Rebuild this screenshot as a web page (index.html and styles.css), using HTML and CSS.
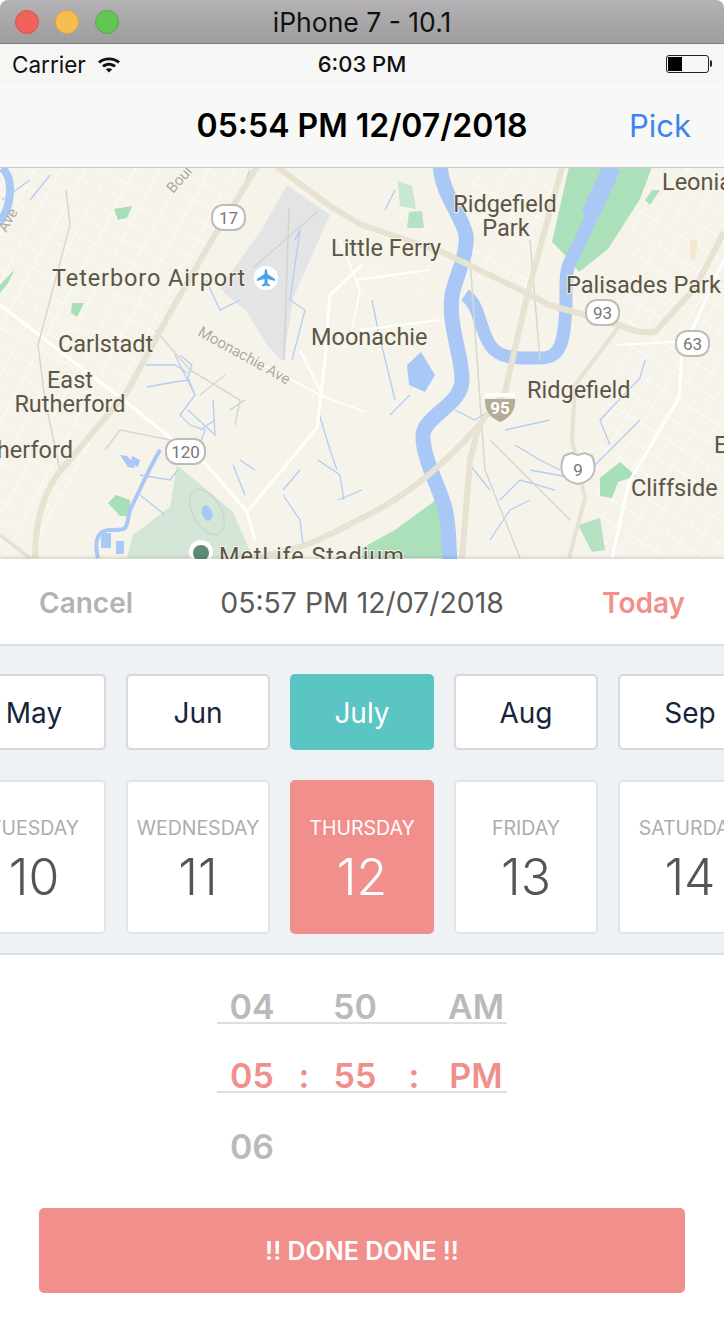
FILE: index.html
```html
<!DOCTYPE html>
<html lang="en">
<head>
    <meta charset="UTF-8" />
    <title>Date Picker</title>
    <link rel="stylesheet" href="styles.css">
</head>
<body>
    <div class="window-bar">
        <div class="lights">
            <span class="light light-red"></span>
            <span class="light light-yellow"></span>
            <span class="light light-green"></span>
        </div>
        <div class="window-title">iPhone 7 - 10.1</div>
    </div>

    <div class="status-bar">
        <div class="carrier">
            Carrier
            <svg class="wifi" width="24" height="18" viewBox="0 0 24 18">
                <path d="M1 6.500C7 1 17 1 23 6.500L21 8.600C16 4.200 8 4.200 3 8.600Z" />
                <path d="M5 10.400C9 7 15 7 19 10.400L17 12.500C14 10 10 10 7 12.500Z" />
                <path d="M8.800 14.200C10.800 12.800 13.200 12.800 15.200 14.200L12 17.600Z" />
            </svg>
        </div>
        <div class="clock">6:03 PM</div>
        <div class="battery"><div class="battery-level"></div></div>
    </div>

    <div class="nav-bar">
        <div class="nav-title">05:54 PM 12/07/2018</div>
        <div class="nav-action">Pick</div>
    </div>

    <div class="map">
        <svg class="map-svg" width="724" height="391" viewBox="0 168 724 391">
            <g class="map-shapes">
                <rect x="0" y="167" width="724" height="392" fill="#f6f3ea" />

                <!-- street grids -->
                <defs>
                    <pattern id="grid-left" width="22" height="17" patternUnits="userSpaceOnUse" patternTransform="rotate(28)">
                        <path d="M0 0H22M0 0V17" stroke="#fff" stroke-width="1.200" fill="none" />
                    </pattern>
                    <pattern id="grid-right" width="20" height="16" patternUnits="userSpaceOnUse" patternTransform="rotate(-58)">
                        <path d="M0 0H20M0 0V16" stroke="#fff" stroke-width="1.200" fill="none" />
                    </pattern>
                    <pattern id="grid-mid" width="30" height="24" patternUnits="userSpaceOnUse" patternTransform="rotate(-62)">
                        <path d="M0 0H30M0 0V24" stroke="#fff" stroke-width="1.100" fill="none" />
                    </pattern>
                </defs>
                <polygon points="0,167 255,167 170,320 120,400 60,500 30,558 0,558" fill="url(#grid-left)" />
                <polygon points="635,167 724,167 724,558 590,558 600,420 625,330" fill="url(#grid-right)" />
                <polygon points="470,167 560,167 525,290 475,280 470,240" fill="url(#grid-mid)" />
                <polygon points="340,230 430,190 440,300 360,310" fill="url(#grid-mid)" opacity="0.7" />

                <!-- parks -->
                <polygon points="569,167 652,167 640,199 608,249 579,272 568,258 552,242" fill="#abe0bb" />
                <polygon points="177,465 233,512 253,558 127,558 133,535 170,507" fill="#d3e6d8" />
                <polygon points="116,495 130,500 130,516 120,516 108,503" fill="#a6dfb8" />
                <polygon points="114,209 132,206 127,218 118,220" fill="#a6dfb8" />
                <polygon points="72,303 84,303 77,317 71,313" fill="#a6dfb8" />
                <polygon points="0,285 15,269 8,283 0,293" fill="#a6dfb8" />
                <polygon points="398,181 412,186 416,209 400,206" fill="#c9e7d0" />
                <polygon points="409,212 422,211 424,228 407,228" fill="#b5e2c3" />
                <polygon points="600,478 620,462 636,476 618,482 612,498 600,496" fill="#a6dfb8" />
                <polygon points="578,525 600,518 605,550 592,552" fill="#b5e2c3" />
                <polygon points="362,548 395,530 440,497 444,558 362,558" fill="#abe0bb" />
                <polygon points="652,190 660,190 650,205 645,200" fill="#abe0bb" />
                <polygon points="690,240 698,240 695,260 690,258" fill="#f1e8cf" />
                <ellipse cx="207" cy="512" rx="14" ry="25" fill="none" stroke="#c9d9cd" stroke-width="1.500" transform="rotate(-30 207 512)" />

                <!-- airport -->
                <polygon points="287,185 330,215 293,298 283,362 267,345 247,312 227,295 220,288 260,232" fill="#e3e4e6" />
                <path class="runway" d="M289 208L284 360M317 212L253 268" />

                <!-- water -->
                <path class="river" d="M440 165C442 195 462 215 466 235C468 255 456 275 452 295C448 325 462 355 462 380C462 405 425 415 423 435C422 455 438 485 444 505C450 525 448 540 450 560" stroke-width="15" />
                <path class="river" d="M465 295C480 305 478 325 490 345C500 360 520 358 540 358C560 358 565 345 566 300C566 280 565 270 572 258C585 235 595 205 612 167" stroke-width="13" />
                <path class="river" d="M612 167L590 215" stroke-width="18" />
                <path class="river" d="M2 168C14 178 12 205 0 222" stroke-width="8" />
                <polygon points="407,365 421,352 435,375 425,392 409,385" fill="#a9c8f5" />
                <polygon points="120,455 120,455 127,456 133,462 135,468 128,467" fill="#a9c8f5" />
                <ellipse cx="207" cy="513" rx="5" ry="8" fill="#a9c8f5" transform="rotate(-20 207 513)" />
                <rect x="101" y="533" width="10" height="15" fill="#a9c8f5" />
                <rect x="116" y="541" width="8" height="13" fill="#a9c8f5" />
                <polygon points="132,456 140,460 138,467 131,463" fill="#a9c8f5" />
                <path class="creek-wide" d="M160 450C148 470 140 490 130 510C125 530 130 530 108 530C95 532 95 545 98 558" />
                <path class="creek" d="M180 355L192 365L188 378L195 395L180 415L190 425L205 430L198 450M146 365L175 365L188 373M147 387L175 382L190 380M175 355L195 395M188 410L215 435L213 400M140 475L170 480L178 470M140 495L165 515M200 430L215 420M230 410L245 400M240 460L255 470M233 465L245 495M283 490L300 470M283 495L300 520L303 545M318 410L330 450L337 470M318 460L340 475L344 500M338 500L362 490M206 280L220 310L240 300M295 240L300 230L290 300L305 310L292 360" />
                <path class="creek" d="M455 410L475 420L505 400M505 430L550 420M515 445L540 460L560 470M530 470L585 480M500 500L520 480L555 490M490 540L510 510L530 500M610 445L600 420L640 378L645 360M585 475L640 420M385 210L395 190M372 300L378 330L395 400M410 395L390 415M470 465L490 490" />
                <path class="creek" d="M2 200L30 180M50 175L30 200M240 195L250 170" />

                <!-- roads -->
                <path class="road-white" d="M0 305L43 338L130 405L167 435L207 465L247 512L255 540M247 512L317 428L325 360L330 295L362 265M724 260L682 352L679 398L629 482L612 558" />
                <path class="road-white thin" d="M200 332L320 395L365 412M615 345L675 342M360 330L440 320M340 240L360 290L350 340M355 280L430 270M560 180L525 290M300 350L320 390" />
                <path class="road-grey" d="M66 190L70 225L38 345L45 400L60 470M170 440L120 430L105 450M155 330L190 370L240 400L235 425M200 395L225 375M530 240L540 360M470 260L485 470L520 558M490 440L570 520" />
                <path class="highway" d="M562 167L529 288L505 392L479 425L470 460L462 558" />
                <path class="highway" d="M479 425C440 470 400 500 362 518C320 540 300 552 245 558" />
                <path class="highway" d="M257 167L213 238L167 318L127 392L57 475C40 500 35 530 35 558" />
                <path class="highway" d="M277 167L333 208L362 225L442 252L525 292L549 305L585 315L619 325C640 335 650 332 655 332L695 288L724 232" />
                <path class="highway thin" d="M620 325L575 385L572 440L585 498L569 558" />
                <path class="highway thin" d="M0 535L30 558" />
            </g>

            <!-- labels -->
            <text class="map-label map-label-wide" x="52" y="286">Teterboro Airport</text>
            <text class="map-label" x="331" y="256">Little Ferry</text>
            <text class="map-label" x="505" y="212" text-anchor="middle">Ridgefield</text>
            <text class="map-label" x="506" y="236" text-anchor="middle">Park</text>
            <text class="map-label" x="662" y="190">Leonia</text>
            <text class="map-label" x="566" y="293">Palisades Park</text>
            <text class="map-label" x="311" y="345">Moonachie</text>
            <text class="map-label" x="58" y="352">Carlstadt</text>
            <text class="map-label" x="70" y="388" text-anchor="middle">East</text>
            <text class="map-label" x="70" y="412" text-anchor="middle">Rutherford</text>
            <text class="map-label" x="73" y="458" text-anchor="end">Rutherford</text>
            <text class="map-label" x="527" y="398">Ridgefield</text>
            <text class="map-label" x="631" y="496">Cliffside</text>
            <text class="map-label" x="714" y="453">E</text>
            <text class="map-label map-label-wide" x="219" y="564">MetLife Stadium</text>
            <text class="map-road-label" transform="translate(197 335) rotate(29)">Moonachie Ave</text>
            <text class="map-road-label" transform="translate(6 233) rotate(-60)">Ave</text>
            <text class="map-road-label" transform="translate(173 194) rotate(-48)">Boul</text>

            <!-- shields -->
            <g class="shield">
                <rect x="212" y="205" width="33" height="25" rx="11" />
                <text x="228.500" y="224">17</text>
            </g>
            <g class="shield">
                <rect x="166" y="439" width="39" height="25" rx="11" />
                <text x="185.500" y="458">120</text>
            </g>
            <g class="shield">
                <rect x="586" y="300" width="33" height="25" rx="11" />
                <text x="602.500" y="319">93</text>
            </g>
            <g class="shield">
                <rect x="676" y="331" width="33" height="25" rx="11" />
                <text x="692.500" y="350">63</text>
            </g>
            <g class="shield">
                <path d="M564 456L571 453L578 455L585 453L592 456C598 470 594 481 578 484C562 481 558 470 564 456Z" />
                <text x="578" y="476">9</text>
            </g>
            <path d="M485 393H515V397H485Z" fill="#fff" />
            <path d="M485 399H515C516 410 510 418 500 422C490 418 484 410 485 399Z" fill="#b5ac95" />
            <text class="shield-95" x="500" y="414">95</text>

            <circle cx="266" cy="278" r="12" fill="#fff" />
            <path d="M266 269C267 269 267.500 271 267.500 274L275 279V281L267.500 279V283L270 285V286.500L266 285.500L262 286.500V285L264.500 283V279L257 281V279L264.500 274C264.500 271 265 269 266 269Z" fill="#4aa3e8" />

            <circle cx="201" cy="552" r="12" fill="#fff" />
            <circle cx="201" cy="553" r="8" fill="#5c8b72" />
        </svg>
    </div>

    <div class="sheet">
        <div class="sheet-header">
            <div class="sheet-cancel">Cancel</div>
            <div class="sheet-time">05:57 PM 12/07/2018</div>
            <div class="sheet-today">Today</div>
        </div>

        <div class="calendar">
            <div class="card-row">
                <div class="card month-card">May</div>
                <div class="card month-card">Jun</div>
                <div class="card month-card month-active">July</div>
                <div class="card month-card">Aug</div>
                <div class="card month-card">Sep</div>
            </div>
            <div class="card-row">
                <div class="card day-card">
                    <div class="day-name">Tuesday</div>
                    <div class="day-number">10</div>
                </div>
                <div class="card day-card">
                    <div class="day-name">Wednesday</div>
                    <div class="day-number">11</div>
                </div>
                <div class="card day-card day-active">
                    <div class="day-name">Thursday</div>
                    <div class="day-number">12</div>
                </div>
                <div class="card day-card">
                    <div class="day-name">Friday</div>
                    <div class="day-number">13</div>
                </div>
                <div class="card day-card">
                    <div class="day-name">Saturday</div>
                    <div class="day-number">14</div>
                </div>
            </div>
        </div>

        <div class="time-picker">
            <div class="time-row time-row-lined">
                <span>04</span><span></span><span>50</span><span></span><span class="time-ampm">AM</span>
            </div>
            <div class="time-row time-row-lined time-row-active">
                <span>05</span><span>:</span><span>55</span><span>:</span><span class="time-ampm">PM</span>
            </div>
            <div class="time-row">
                <span>06</span><span></span><span></span><span></span><span></span>
            </div>
        </div>

        <div class="done-wrap">
            <div class="done-button">!! DONE DONE !!</div>
        </div>
    </div>
</body>
</html>
```

FILE: styles.css
```css
html {
    height: 100%;
}
body {
    margin: 0;
    padding: 0;
    width: 724px;
    height: 1332px;
    overflow: hidden;
    background: #fff;
    font-family: "Inter", "Liberation Sans", sans-serif;
}
.window-bar {
    position: relative;
    display: flex;
    align-items: center;
    justify-content: center;
    height: 43px;
    border-bottom: 1px solid #7d7b7d;
    border-radius: 8px 8px 0 0;
    background: linear-gradient(#b4b2b4, #9e9c9e);
}
.lights {
    position: absolute;
    left: 15px;
    top: 10px;
    display: flex;
    gap: 16px;
}
.light {
    width: 24px;
    height: 24px;
    border-radius: 50%;
    box-sizing: border-box;
}
.light-red {
    background: #f0625c;
    border: 1px solid #d9534f;
}
.light-yellow {
    background: #f6bd4f;
    border: 1px solid #dea63e;
}
.light-green {
    background: #62c655;
    border: 1px solid #50ab46;
}
.window-title {
    font-size: 26.500px;
    color: #111;
}
.status-bar {
    display: flex;
    align-items: center;
    justify-content: space-between;
    position: relative;
    height: 40px;
    padding: 0 15px 0 12px;
    background: #f6f6f4;
    color: #111;
}
.carrier {
    display: flex;
    align-items: center;
    gap: 11px;
    font-size: 22.500px;
}
.wifi {
    fill: #111;
}
.clock {
    position: absolute;
    left: 0;
    right: 0;
    text-align: center;
    font-size: 22px;
    font-weight: 500;
}
.battery {
    position: relative;
    width: 43px;
    height: 18px;
    box-sizing: border-box;
    border: 1.500px solid #222;
    border-radius: 3px;
    padding: 1px;
}
.battery::after {
    content: "";
    position: absolute;
    right: -4px;
    top: 4px;
    width: 2px;
    height: 7px;
    background: #222;
    border-radius: 0 2px 2px 0;
}
.battery-level {
    width: 14px;
    height: 100%;
    background: #000;
}
.nav-bar {
    position: relative;
    display: flex;
    align-items: center;
    justify-content: flex-end;
    height: 84px;
    box-sizing: border-box;
    padding: 0 33px 0 0;
    border-bottom: 1px solid #c8c8c6;
    background: #f8f8f6;
}
.nav-title {
    position: absolute;
    left: 0;
    right: 0;
    text-align: center;
    font-size: 32px;
    font-weight: 600;
    color: #000;
}
.nav-action {
    font-size: 31px;
    color: #3b87ef;
}
.map {
    height: 391px;
    overflow: hidden;
}
.map-svg {
    display: block;
}
.map-shapes {
    filter: blur(0.6px);
}
.river {
    fill: none;
    stroke: #a9c8f5;
    stroke-linejoin: round;
}
.creek-wide {
    fill: none;
    stroke: #a9c8f5;
    stroke-width: 4;
}
.creek {
    fill: none;
    stroke: #b3cdf4;
    stroke-width: 1.300;
}
.road-white {
    fill: none;
    stroke: #fff;
    stroke-width: 3;
}
.road-white.thin {
    stroke-width: 1.800;
}
.road-grey {
    fill: none;
    stroke: #d9d6cd;
    stroke-width: 1.500;
}
.highway {
    fill: none;
    stroke: #e7e2d2;
    stroke-width: 6;
    stroke-linejoin: round;
}
.highway.thin {
    stroke-width: 4;
}
.runway {
    fill: none;
    stroke: #d3d3d3;
    stroke-width: 1.500;
}
.map-label {
    font-family: "Roboto", sans-serif;
    font-size: 23.500px;
    fill: #5c5646;
    stroke: #f6f3ea;
    stroke-width: 2px;
    paint-order: stroke;
}
.map-label-wide {
    letter-spacing: 0.900px;
}
.map-road-label {
    font-family: "Roboto", sans-serif;
    font-size: 15px;
    fill: #aeaba3;
}
.shield rect, .shield path {
    fill: #fff;
    stroke: #bdbdb8;
    stroke-width: 2;
}
.shield text {
    font-family: "Roboto", sans-serif;
    font-size: 17px;
    fill: #777;
    text-anchor: middle;
}
.shield-95 {
    font-family: "Roboto", sans-serif;
    font-size: 17px;
    font-weight: 700;
    fill: #fff;
    text-anchor: middle;
}
.sheet {
    display: flex;
    flex-direction: column;
    background: #fff;
}
.sheet-header {
    display: grid;
    grid-template-columns: 1fr auto 1fr;
    align-items: center;
    height: 87px;
    box-sizing: border-box;
    padding: 2px 39px 0 39px;
    border-bottom: 2px solid #dcdee0;
    box-shadow: 0 -2px 3px rgba(0, 0, 0, 0.12);
    font-size: 28.400px;
}
.sheet-cancel {
    color: #b3b3b3;
    font-weight: 600;
    font-size: 28px;
}
.sheet-time {
    color: #5a5a5a;
}
.sheet-today {
    color: #f08f8b;
    font-weight: 600;
    font-size: 28px;
    text-align: right;
}
.calendar {
    display: flex;
    flex-direction: column;
    gap: 30px;
    height: 309px;
    box-sizing: border-box;
    padding-top: 28px;
    background: #eff2f4;
    border-bottom: 2px solid #dcdee0;
    overflow: hidden;
}
.card-row {
    display: flex;
    justify-content: center;
    gap: 20px;
}
.card {
    flex: 0 0 144px;
    box-sizing: border-box;
    background: #fff;
    border: 2px solid #d6d8db;
    border-radius: 5px;
}
.month-card {
    display: flex;
    align-items: center;
    justify-content: center;
    height: 76px;
    padding-top: 2px;
    font-size: 28px;
    color: #15263a;
}
.month-active {
    background: #5ac5c3;
    border-color: #5ac5c3;
    color: #fff;
}
.day-card {
    display: flex;
    flex-direction: column;
    align-items: center;
    height: 154px;
    padding-top: 34px;
    white-space: nowrap;
    overflow: hidden;
    border-color: #e2e4e6;
}
.day-name {
    font-size: 19.500px;
    line-height: 24px;
    color: #adadad;
    text-transform: uppercase;
}
.day-number {
    margin-top: 9px;
    font-size: 50px;
    line-height: 56px;
    font-weight: 300;
    color: #555;
}
.day-active {
    background: #f08f8b;
    border-color: #f08f8b;
}
.day-active .day-name, .day-active .day-number {
    color: #fff;
}
.time-picker {
    width: 290px;
    margin: 0 auto;
    color: #bababa;
    font-size: 34px;
    font-weight: 600;
}
.time-row {
    display: grid;
    grid-template-columns: 70px 34px 68px 50px 68px;
    height: 69px;
    box-sizing: border-box;
    text-align: center;
    align-items: end;
    line-height: 30px;
    padding-bottom: 0;
}
.time-row-lined {
    border-bottom: 2px solid #dedede;
}
.time-row-active {
    color: #f08f8b;
}
.time-ampm {
    padding-left: 6px;
}
.done-wrap {
    padding: 46px 39px 0;
}
.done-button {
    display: flex;
    align-items: center;
    justify-content: center;
    height: 85px;
    border-radius: 5px;
    background: #f08f8b;
    color: #fff;
    font-size: 25px;
    font-weight: 600;
}
```
